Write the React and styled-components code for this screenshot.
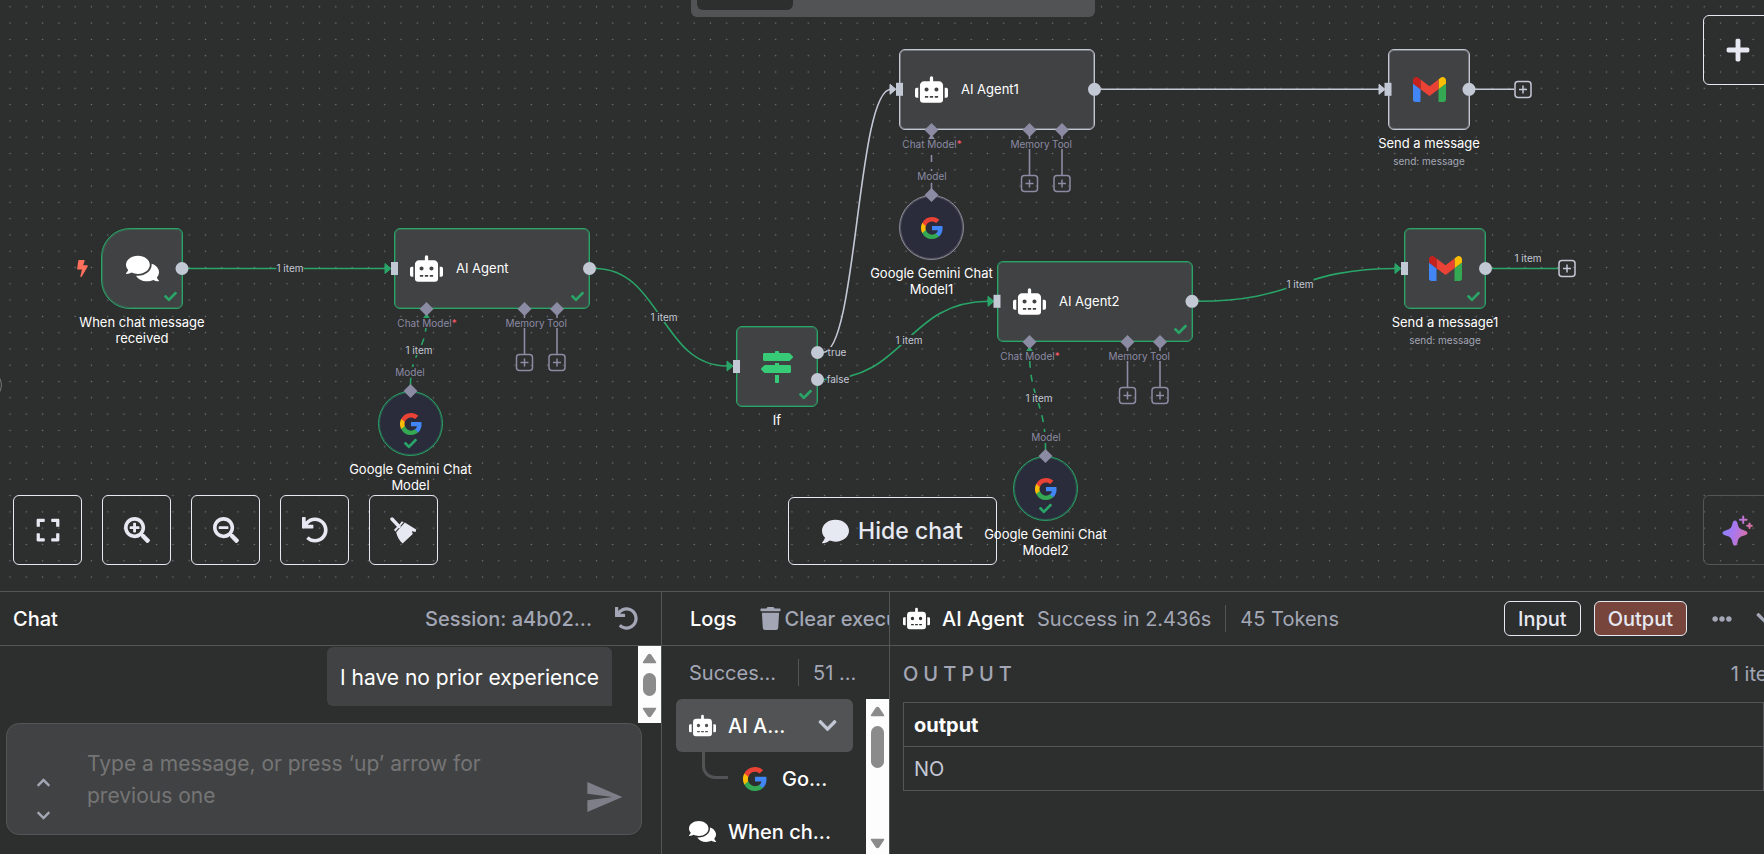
import React from 'react';
import styled, { createGlobalStyle, css } from 'styled-components';
import {
  FaBolt, FaCheck, FaChevronDown, FaChevronUp, FaComment, FaComments, FaEllipsisH,
  FaExpand, FaMapSigns, FaPlus, FaRobot, FaSearchMinus, FaSearchPlus, FaTrash, FaUndo,
} from 'react-icons/fa';
import { MdSend } from 'react-icons/md';

const c = {
  bg: '#2d2e2e',
  surface: '#414244',
  raised: '#525355',
  line: '#545556',
  green: '#29a568',
  port: '#c3c8d5',
  sub: '#8b8ba3',
  text: '#ffffff',
  soft: '#e6e9f2',
  muted: '#a3a7b5',
};

const GlobalStyle = createGlobalStyle`
  * { box-sizing: border-box; }
  body { margin: 0; background: ${c.bg}; overflow: hidden; }
  body, button, textarea, table { font-family: Inter, "Liberation Sans", sans-serif; }
`;

/* ---------- page frame ---------- */

const Viewport = styled.div`
  height: 100vh;
  overflow: hidden;
  color: ${c.text};
  font-size: 20px;
`;

const Shell = styled.div`
  width: calc(100% + 21px);
  height: 100%;
  display: grid;
  grid-template-rows: minmax(0, 9fr) minmax(0, 4fr);
`;

const Canvas = styled.main`
  position: relative;
  overflow: hidden;
`;

const Panels = styled.section`
  display: grid;
  grid-template-columns: 662fr 228fr 895fr;
  border-top: 1px solid ${c.line};
  min-height: 0;
`;

const Drawing = styled.svg`
  position: absolute;
  inset: 0;
  width: 100%;
  height: 100%;
  pointer-events: none;
`;

/* ---------- canvas nodes ---------- */

const nodeShapes = {
  square: css`width: 82px; height: 81px; border-radius: 6px;`,
  trigger: css`width: 82px; height: 81px; border-radius: 29px 6px 6px 29px;`,
  wide: css`width: 196px; height: 81px; border-radius: 6px; justify-content: flex-start; padding-left: 15px; gap: 13px;`,
  round: css`width: 65px; height: 65px; border-radius: 50%; background: #2b2c3b;`,
};

const NodeBox = styled.div`
  position: absolute;
  left: ${(p) => p.$x}px;
  top: ${(p) => p.$y}px;
  display: flex;
  align-items: center;
  justify-content: center;
  background: ${c.surface};
  border: 1px solid ${(p) => p.$color};
  box-shadow: inset 0 0 0 1px ${(p) => p.$color}66;
  ${(p) => nodeShapes[p.$shape]}
`;

const NodeCheck = styled(FaCheck)`
  position: absolute;
  color: ${c.green};
  width: 13px;
  height: 13px;
  bottom: 5px;
  right: ${(p) => (p.$center ? '25px' : '5px')};
`;

const NodeCaption = styled.div`
  position: absolute;
  top: calc(100% + 6px);
  left: 50%;
  width: 130px;
  margin-left: -65px;
  text-align: center;
  font-size: 13px;
  line-height: 16px;
`;

const NodeName = styled.div`
  font-size: 13px;
  line-height: 16px;
  padding-bottom: 1px;
`;

const NodeNote = styled.div`
  margin-top: 2px;
  font-size: 10px;
  color: ${c.muted};
`;

const Tag = styled.span`
  position: absolute;
  left: ${(p) => p.$x}px;
  top: ${(p) => p.$y}px;
  transform: translate(-50%, -50%);
  font-size: 10px;
  line-height: 10px;
  white-space: nowrap;
  background: ${c.bg};
  color: ${(p) => (p.$port ? c.sub : c.port)};
`;

const Required = styled.span`
  color: #ff5c6c;
`;

const BoltMark = styled(FaBolt)`
  position: absolute;
  left: 74px;
  top: 260px;
  width: 17px;
  height: 17px;
  color: #ff6f5c;
`;

/* ---------- canvas controls ---------- */

const ViewTabs = styled.nav`
  position: absolute;
  top: 0;
  left: 50%;
  width: 404px;
  margin-left: -202px;
  height: 17px;
  padding: 0 6px;
  background: ${c.raised};
  border-radius: 0 0 6px 6px;
`;

const ViewTab = styled.button`
  display: block;
  width: 96px;
  height: 10px;
  padding: 0;
  border: 0;
  border-radius: 0 0 6px 6px;
  background: ${c.bg};
`;

const SquareButton = styled.button`
  width: 69px;
  height: 70px;
  padding: 0;
  display: flex;
  align-items: center;
  justify-content: center;
  background: transparent;
  color: ${c.soft};
  border: 1px solid ${(p) => (p.$quiet ? c.line : c.soft)};
  border-radius: 6px;
`;

const BottomBar = styled.div`
  position: absolute;
  left: 13px;
  right: 13px;
  bottom: 26px;
  display: grid;
  grid-template-columns: 1fr auto 1fr;
  align-items: end;
`;

const ButtonRow = styled.div`
  display: flex;
  gap: 20px;
  justify-content: ${(p) => (p.$end ? 'flex-end' : 'flex-start')};
`;

const AddSlot = styled.div`
  position: absolute;
  top: 15px;
  right: 13px;
`;

const HideChat = styled.button`
  height: 68px;
  width: 209px;
  display: flex;
  align-items: center;
  justify-content: center;
  gap: 9px;
  background: transparent;
  color: ${c.soft};
  border: 1px solid ${c.soft};
  border-radius: 6px;
  font-size: 23px;
  font-weight: 500;
`;

const SidebarToggle = styled.button`
  position: absolute;
  left: -28px;
  top: 370px;
  width: 30px;
  height: 30px;
  border-radius: 50%;
  border: 1px solid #77787a;
  background: ${c.bg};
`;

/* ---------- lower panels ---------- */

const Panel = styled.section`
  display: flex;
  flex-direction: column;
  min-width: 0;
  min-height: 0;
  overflow: hidden;
  border-right: ${(p) => (p.$last ? '0' : `1px solid ${c.line}`)};
`;

const PanelHeader = styled.header`
  flex: none;
  height: 54px;
  display: flex;
  align-items: center;
  border-bottom: 1px solid ${c.line};
  padding: 0 ${(p) => p.$right || 0}px 0 ${(p) => p.$left}px;
  overflow: hidden;
  white-space: nowrap;
`;

const Title = styled.h2`
  margin: 0;
  font-size: 20px;
  font-weight: 500;
`;

const Muted = styled.span`
  color: ${c.muted};
`;

const Session = styled(Muted)`
  margin: 0 23px 0 auto;
  font-weight: 500;
`;

const TokenCount = styled(Muted)`
  width: 76px;
`;

const Spacer = styled.div`
  flex: 1;
`;

const IconButton = styled.button`
  display: flex;
  align-items: center;
  flex: none;
  padding: 0;
  border: 0;
  background: none;
  color: ${(p) => p.$color || c.muted};
`;

const ClearButton = styled(IconButton)`
  gap: 3px;
  margin-left: 22px;
  font-size: 20px;
  font-weight: 500;
`;

const Divider = styled.span`
  flex: none;
  width: 1px;
  height: 27px;
  margin: 0 14px;
  background: ${c.line};
`;

const Messages = styled.div`
  flex: 1;
  min-height: 0;
  display: flex;
  justify-content: flex-end;
`;

const Bubble = styled.p`
  margin: 1px 26px 0 0;
  height: 59px;
  padding: 0 13px;
  font-size: 21px;
  line-height: 61px;
  background: ${c.surface};
  border-radius: 6px 6px 0 6px;
`;

const Composer = styled.form`
  flex: none;
  height: 112px;
  margin: 0 19px 19px 6px;
  padding: 0 17px 0 29px;
  display: flex;
  align-items: flex-end;
  background: ${c.surface};
  border: 1px solid ${c.line};
  border-radius: 13px;
`;

const HistoryButtons = styled.div`
  display: flex;
  flex-direction: column;
  justify-content: space-between;
  height: 48px;
  margin: 0 37px 11px 0;
  width: 14px;
  align-items: center;
`;

const MessageInput = styled.textarea`
  flex: 1;
  min-width: 0;
  align-self: stretch;
  padding: 24px 0 0 0;
  margin-right: 60px;
  border: 0;
  resize: none;
  background: transparent;
  color: ${c.text};
  font-size: 21px;
  line-height: 32px;
  &::placeholder { color: #757575; }
`;

const SendButton = styled(IconButton)`
  margin-bottom: 17px;
`;

const Track = styled.div`
  flex: none;
  width: 23px;
  align-self: stretch;
  background: #fdfdfd;
  display: flex;
  flex-direction: column;
  align-items: center;
  padding: 7px 0 5px;
`;

const Thumb = styled.div`
  width: 13px;
  height: ${(p) => p.$h}px;
  margin-top: 9px;
  border-radius: 7px;
  background: #8b8b8b;
`;

const LogSummary = styled.div`
  flex: none;
  height: 53px;
  display: flex;
  align-items: center;
  padding-left: 27px;
  white-space: nowrap;
`;

const LogBody = styled.div`
  flex: 1;
  min-height: 0;
  display: flex;
`;

const LogList = styled.ul`
  flex: 1;
  min-width: 0;
  margin: 0;
  padding: 0 13px 0 14px;
  list-style: none;
`;

const LogRow = styled.li`
  height: 53px;
  display: flex;
  align-items: center;
  gap: ${(p) => (p.$nested ? 15 : 12)}px;
  padding: 0 15px 0 13px;
  border-radius: 6px;
  font-weight: 500;
  white-space: nowrap;
  background: ${(p) => (p.$selected ? c.raised : 'transparent')};
`;

const Branch = styled.span`
  align-self: flex-start;
  width: 26px;
  height: 27px;
  margin-left: 13px;
  border-left: 3px solid ${c.raised};
  border-bottom: 3px solid ${c.raised};
  border-bottom-left-radius: 13px;
`;

const ToggleButton = styled.button`
  height: 35px;
  padding: 0 13px;
  margin-right: 13px;
  border: 1px solid ${c.soft};
  border-radius: 6px;
  background: ${(p) => (p.$active ? '#77453c' : 'transparent')};
  color: ${c.soft};
  font-size: 20px;
  font-weight: 500;
`;

const AgentTitle = styled(Title)`
  margin-left: 12px;
`;

const RunMeta = styled.div`
  display: flex;
  align-items: center;
  margin-left: 13px;
`;

const HeaderActions = styled.div`
  display: flex;
  align-items: center;
  gap: 23px;
  margin-left: 12px;
`;

const OutputHead = styled.div`
  display: flex;
  justify-content: space-between;
  align-items: center;
  height: 56px;
  padding: 0 0 0 13px;
`;

const OutputLabel = styled.h3`
  margin: 0;
  font-size: 20px;
  font-weight: 500;
  letter-spacing: 5px;
  color: ${c.muted};
`;

const DataTable = styled.table`
  margin: 0 21px 0 13px;
  border-collapse: collapse;
  text-align: left;
  th, td {
    height: 44px;
    padding: 0 10px;
    border: 1px solid ${c.line};
    font-size: 20px;
  }
  th { font-weight: 700; }
  td { color: ${c.port}; }
`;

/* ---------- drawn icons ---------- */

const GoogleIcon = ({ size = 22 }) => (
  <svg width={size} height={size} viewBox="1 1 22 22" aria-hidden="true">
    <path fill="#4285f4" d="M22.56 12.25c0-.78-.07-1.53-.2-2.25H12v4.26h5.92a5.06 5.06 0 0 1-2.2 3.32v2.77h3.57c2.08-1.92 3.27-4.74 3.27-8.1z" />
    <path fill="#34a853" d="M12 23c2.97 0 5.46-.98 7.28-2.66l-3.57-2.77c-.98.66-2.23 1.06-3.71 1.06-2.86 0-5.29-1.93-6.16-4.53H2.18v2.84A11 11 0 0 0 12 23z" />
    <path fill="#fbbc05" d="M5.84 14.09a6.6 6.6 0 0 1 0-4.18V7.07H2.18a11 11 0 0 0 0 9.86l3.66-2.84z" />
    <path fill="#ea4335" d="M12 5.38c1.62 0 3.06.56 4.21 1.64l3.15-3.15C17.45 2.09 14.97 1 12 1A11 11 0 0 0 2.18 7.07l3.66 2.84C6.71 7.31 9.14 5.38 12 5.38z" />
  </svg>
);

const GmailIcon = () => (
  <svg width="33" height="25" viewBox="52 42 88 66" aria-hidden="true">
    <path fill="#4285f4" d="M58 108h14V74L52 59v43c0 3.32 2.69 6 6 6" />
    <path fill="#34a853" d="M120 108h14c3.32 0 6-2.69 6-6V59l-20 15" />
    <path fill="#fbbc04" d="M120 48v26l20-15v-8c0-7.42-8.47-11.65-14.4-7.2" />
    <path fill="#ea4335" d="M72 74V48l24 18 24-18v26L96 92" />
    <path fill="#c5221f" d="M52 51v8l20 15V48l-5.6-4.2c-5.94-4.45-14.4-.22-14.4 7.2" />
  </svg>
);

const BroomIcon = () => (
  <svg width="27" height="27" viewBox="0 0 27 27" fill="currentColor" aria-hidden="true">
    <path d="M2 2 9 9.5" stroke="currentColor" strokeWidth="3.4" strokeLinecap="round" />
    <path d="M4.2 12.6 8.2 8.8 9 8.2 11.6 4.6Q12.6 4 13.6 5.2L5.4 14.4Q4 13.8 4.2 12.6Z" />
    <path d="M14.8 5.6 26.2 12.4 25.6 15 21.8 14.2 22.8 17 12.6 26.6Q7.4 21.6 6.2 15.2Z" />
  </svg>
);

const SparkleIcon = () => (
  <svg width="31" height="31" viewBox="0 0 31 31" aria-hidden="true">
    <defs>
      <linearGradient id="spark" x1="0" y1="0" x2="31" y2="8" gradientUnits="userSpaceOnUse">
        <stop offset="0" stopColor="#7d86fb" />
        <stop offset="0.5" stopColor="#aa77ee" />
        <stop offset="1" stopColor="#e0709a" />
      </linearGradient>
    </defs>
    <path fill="url(#spark)" d="M13 5.5c1.3 0 2 1 2.4 2.6 1.2 5 1.6 5.7 7 7.3C24.2 16 25.5 16.7 25.5 18s-1.3 2-3.1 2.6c-5.4 1.6-5.8 2.3-7 7.3C15 29.5 14.3 30.5 13 30.5s-2-1-2.4-2.6c-1.2-5-1.6-5.7-7-7.3C1.8 20 .5 19.3.5 18s1.3-2 3.1-2.6c5.4-1.6 5.8-2.3 7-7.3C11 6.500 11.700 5.500 13 5.500z" />
    <path stroke="url(#spark)" strokeWidth="2" strokeLinecap="round" fill="none" d="M21.2 1.5V8M18 4.7h6.600M27.500 8.500v4.400M25.200 10.700h4.600" />
  </svg>
);

const TrackArrow = ({ down }) => (
  <svg width="15" height="11" viewBox="0 0 15 11" aria-hidden="true">
    <path
      d={down ? 'M1.5 1.5h12l-5 7.5q-1 1-2 0z' : 'M1.5 9.5h12l-5-7.5q-1-1-2 0z'}
      fill="#8b8b8b" stroke="#8b8b8b" strokeWidth="1.5" strokeLinejoin="round"
    />
  </svg>
);

const Scrollbar = ({ thumb }) => (
  <Track>
    <TrackArrow />
    <Thumb $h={thumb} />
    <Spacer />
    <TrackArrow down />
  </Track>
);

/* ---------- workflow data ---------- */

const nodes = [
  { x: 101, y: 228, shape: 'trigger', done: true, icon: <FaComments size={33} />, caption: 'When chat message received' },
  { x: 394, y: 228, shape: 'wide', done: true, name: 'AI Agent' },
  { x: 736, y: 326, shape: 'square', done: true, icon: <FaMapSigns size={32} color="#37cb77" />, caption: 'If' },
  { x: 899, y: 49, shape: 'wide', name: 'AI Agent1' },
  { x: 1388, y: 49, shape: 'square', icon: <GmailIcon />, caption: 'Send a message', note: 'send: message' },
  { x: 997, y: 261, shape: 'wide', done: true, name: 'AI Agent2' },
  { x: 1404, y: 228, shape: 'square', done: true, icon: <GmailIcon />, caption: 'Send a message1', note: 'send: message' },
  { x: 378, y: 391, shape: 'round', done: true, icon: <GoogleIcon />, caption: 'Google Gemini Chat Model' },
  { x: 899, y: 195, shape: 'round', icon: <GoogleIcon />, caption: 'Google Gemini Chat Model1' },
  { x: 1013, y: 456, shape: 'round', done: true, icon: <GoogleIcon />, caption: 'Google Gemini Chat Model2' },
];

const flows = [
  { d: 'M188 268.5H386', tip: [385, 268.5], done: true },
  { d: 'M595 268.5C661 268.5 661 366 727 366', tip: [727, 366], done: true },
  { d: 'M823 352.5C857 352.5 857 89.3 891 89.3', tip: [890, 89.3] },
  { d: 'M823 379.5C906 379.5 906 301.3 989 301.3', tip: [988, 301.3], done: true },
  { d: 'M1101 89.3H1380', tip: [1379, 89.3] },
  { d: 'M1198 301.3C1297 301.3 1297 268.5 1397 268.5', tip: [1395, 268.5], done: true },
  { d: 'M1475 89.3H1514' },
  { d: 'M1491 268.5H1558', done: true },
];

const modelLinks = [
  { from: [410.5, 385], to: [426.5, 318], color: c.green },
  { from: [931.5, 190], to: [931.5, 139], color: c.sub },
  { from: [1045.5, 450], to: [1029.5, 351], color: c.green },
];

const agents = [[394, 228], [899, 49], [997, 261]];
const outputs = [[182, 268.5], [589.5, 268.5], [817.5, 352.5], [817.5, 379.5], [1094.5, 89.3], [1192, 301.3], [1469, 89.3], [1485.5, 268.5]];
const inputs = [[394.5, 268.5], [736.5, 366.5], [899.5, 89.3], [997, 301.3], [1388, 89.3], [1404.5, 268.5]];

const edgeTags = [
  [290, 268, '1 item'], [664, 317, '1 item'], [909, 340, '1 item'], [1300, 284, '1 item'],
  [1528, 258, '1 item'], [419, 350, '1 item'], [1039, 398, '1 item'], [837, 352, 'true'], [838, 379, 'false'],
];

const modelTags = [[410, 372], [932, 176], [1046, 437]];

const AddPort = ({ x, y, color }) => (
  <g stroke={color} fill="none" strokeWidth="1.5">
    <rect x={x - 8} y={y - 8} width="16" height="16" rx="3" />
    <path d={`M${x - 4} ${y}h8M${x} ${y - 4}v8`} />
  </g>
);

const Diamond = ({ x, y }) => (
  <path fill={c.sub} d={`M${x} ${y - 7}l7 7-7 7-7-7z`} />
);

const Edges = () => (
  <Drawing aria-hidden="true">
    <defs>
      <pattern id="dots" x="1.86" y="-1.3" width="16.291" height="16.291" patternUnits="userSpaceOnUse">
        <circle cx="8.15" cy="8.15" r="0.75" fill="#77787b" />
      </pattern>
    </defs>
    <rect width="100%" height="100%" fill="url(#dots)" />
    {flows.map((f) => (
      <g key={f.d}>
        <path d={f.d} fill="none" strokeWidth="1.6" stroke={f.done ? c.green : c.port} />
        {f.tip && (
          <path d={`M${f.tip[0]} ${f.tip[1] - 5}l6 5-6 5z`} fill={f.done ? c.green : c.port}
            stroke={f.done ? c.green : c.port} strokeLinejoin="round" />
        )}
      </g>
    ))}
    {modelLinks.map(({ from, to, color }) => {
      const mid = (from[1] + to[1]) / 2;
      return (
        <g key={from[0]}>
          <path d={`M${from}C${from[0]} ${mid} ${to[0]} ${mid} ${to}`} fill="none"
            stroke={color} strokeWidth="1.6" strokeDasharray="7 7" />
          <path d={`M${to[0]} ${to[1] - 5}l4 6h-8z`} fill={color} />
        </g>
      );
    })}
    {agents.map(([x, y]) => (
      <g key={x}>
        <path d={`M${x + 130.5} ${y + 81}v46M${x + 163} ${y + 81}v46`} stroke={c.sub} strokeWidth="1.6" />
        <AddPort x={x + 130.5} y={y + 134.5} color={c.sub} />
        <AddPort x={x + 163} y={y + 134.5} color={c.sub} />
      </g>
    ))}
    <AddPort x={1523} y={89.5} color={c.port} />
    <AddPort x={1567} y={268.5} color={c.port} />
  </Drawing>
);

const Ports = () => (
  <Drawing aria-hidden="true">
    {outputs.map(([x, y]) => <circle key={`${x}-${y}`} cx={x} cy={y} r="6.5" fill={c.port} />)}
    {inputs.map(([x, y]) => <rect key={`${x}-${y}`} x={x - 3.5} y={y - 6.5} width="7" height="13" fill={c.port} />)}
    {agents.map(([x, y]) => (
      <g key={x}>
        <Diamond x={x + 32.5} y={y + 81} />
        <Diamond x={x + 130.5} y={y + 81} />
        <Diamond x={x + 163} y={y + 81} />
      </g>
    ))}
    <Diamond x={410.5} y={391} />
    <Diamond x={931.5} y={195} />
    <Diamond x={1045.5} y={456} />
  </Drawing>
);

const WorkflowNode = ({ node }) => (
  <NodeBox
    $x={node.x} $y={node.y} $shape={node.shape}
    $color={node.done ? c.green : node.shape === 'round' ? '#8f8f9b' : c.port}
  >
    {node.name ? <><FaRobot size={33} /><NodeName>{node.name}</NodeName></> : node.icon}
    {node.done && <NodeCheck $center={node.shape === 'round'} />}
    {node.caption && (
      <NodeCaption>
        {node.caption}
        {node.note && <NodeNote>{node.note}</NodeNote>}
      </NodeCaption>
    )}
  </NodeBox>
);

export default function App() {
  return (
    <Viewport>
      <GlobalStyle />
      <Shell>
        <Canvas>
          <Edges />
          <ViewTabs aria-label="Workflow views"><ViewTab type="button" aria-label="Editor" /></ViewTabs>
          <SidebarToggle type="button" aria-label="Expand sidebar" />
          <AddSlot>
            <SquareButton type="button" aria-label="Add node"><FaPlus size={26} /></SquareButton>
          </AddSlot>
          <BottomBar>
            <ButtonRow>
              <SquareButton type="button" aria-label="Fit view"><FaExpand size={26} /></SquareButton>
              <SquareButton type="button" aria-label="Zoom in"><FaSearchPlus size={26} /></SquareButton>
              <SquareButton type="button" aria-label="Zoom out"><FaSearchMinus size={26} /></SquareButton>
              <SquareButton type="button" aria-label="Reset zoom"><FaUndo size={26} /></SquareButton>
              <SquareButton type="button" aria-label="Tidy up"><BroomIcon /></SquareButton>
            </ButtonRow>
            <HideChat type="button"><FaComment size={27} />Hide chat</HideChat>
            <ButtonRow $end>
              <SquareButton type="button" aria-label="Assistant" $quiet><SparkleIcon /></SquareButton>
            </ButtonRow>
          </BottomBar>
          <BoltMark />
          {nodes.map((n) => <WorkflowNode key={`${n.x}-${n.y}`} node={n} />)}
          {edgeTags.map(([x, y, label]) => <Tag key={`${x}-${y}`} $x={x} $y={y}>{label}</Tag>)}
          {agents.map(([x, y]) => (
            <React.Fragment key={x}>
              <Tag $port $x={x + 33} $y={y + 95}>Chat Model<Required>*</Required></Tag>
              <Tag $port $x={x + 131} $y={y + 95}>Memory</Tag>
              <Tag $port $x={x + 163} $y={y + 95}>Tool</Tag>
            </React.Fragment>
          ))}
          {modelTags.map(([x, y]) => <Tag key={x} $port $x={x} $y={y}>Model</Tag>)}
          <Ports />
        </Canvas>

        <Panels>
          <Panel>
            <PanelHeader $left={13} $right={23}>
              <Title>Chat</Title>
              <Session>Session: a4b02...</Session>
              <IconButton type="button" aria-label="Reset session"><FaUndo size={23} /></IconButton>
            </PanelHeader>
            <Messages>
              <Bubble>I have no prior experience</Bubble>
              <Scrollbar thumb={23} />
            </Messages>
            <Composer onSubmit={(e) => e.preventDefault()}>
              <HistoryButtons>
                <IconButton type="button" aria-label="Previous message"><FaChevronUp size={15} /></IconButton>
                <IconButton type="button" aria-label="Next message"><FaChevronDown size={15} /></IconButton>
              </HistoryButtons>
              <MessageInput aria-label="Message" placeholder="Type a message, or press ‘up’ arrow for previous one" />
              <SendButton type="submit" aria-label="Send" $color="#7d7e87"><MdSend size={40} /></SendButton>
            </Composer>
          </Panel>

          <Panel>
            <PanelHeader $left={28}>
              <Title>Logs</Title>
              <ClearButton type="button"><FaTrash size={23} />Clear execution</ClearButton>
            </PanelHeader>
            <LogSummary>
              <Muted>Succes...</Muted>
              <Spacer />
              <Divider />
              <TokenCount>51 ...</TokenCount>
            </LogSummary>
            <LogBody>
              <LogList>
                <LogRow $selected>
                  <FaRobot size={27} />AI A...
                  <Spacer />
                  <IconButton type="button" aria-label="Collapse" $color={c.port}><FaChevronDown size={21} /></IconButton>
                </LogRow>
                <LogRow $nested>
                  <Branch />
                  <GoogleIcon size={24} />Go...
                </LogRow>
                <LogRow><FaComments size={27} />When ch...</LogRow>
              </LogList>
              <Scrollbar thumb={42} />
            </LogBody>
          </Panel>

          <Panel $last>
            <PanelHeader $left={13} $right={9}>
              <FaRobot size={27} />
              <AgentTitle>AI Agent</AgentTitle>
              <RunMeta>
                <Muted>Success in 2.436s</Muted>
                <Divider />
                <Muted>45 Tokens</Muted>
              </RunMeta>
              <Spacer />
              <ToggleButton type="button">Input</ToggleButton>
              <ToggleButton type="button" $active>Output</ToggleButton>
              <HeaderActions>
                <IconButton type="button" aria-label="More"><FaEllipsisH size={20} /></IconButton>
                <IconButton type="button" aria-label="Collapse panel"><FaChevronDown size={21} /></IconButton>
              </HeaderActions>
            </PanelHeader>
            <OutputHead>
              <OutputLabel>OUTPUT</OutputLabel>
              <Muted>1 item</Muted>
            </OutputHead>
            <DataTable>
              <thead><tr><th scope="col">output</th></tr></thead>
              <tbody><tr><td>NO</td></tr></tbody>
            </DataTable>
          </Panel>
        </Panels>
      </Shell>
    </Viewport>
  );
}
